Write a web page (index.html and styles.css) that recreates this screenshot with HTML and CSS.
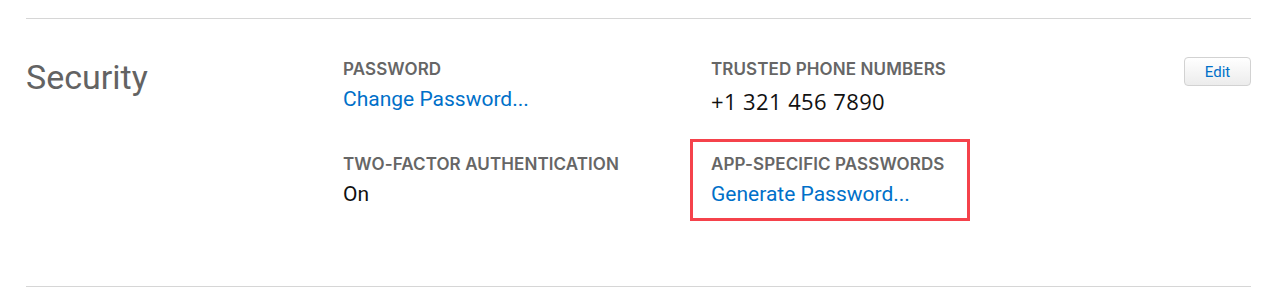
FILE: index.html
```html
<!DOCTYPE html>
<html lang="en">
<head>
<meta charset="utf-8">
<title>Security</title>
<link rel="stylesheet" href="styles.css">
</head>
<body>
<div class="page">
  <section class="section">
    <h2 class="section-title">Security</h2>
    <div class="fields">
      <div class="field">
        <div class="field-label">PASSWORD</div>
        <a class="field-link" href="#">Change Password...</a>
      </div>
      <div class="field">
        <div class="field-label">TRUSTED PHONE NUMBERS</div>
        <div class="field-value phone">+1 321 456 7890</div>
      </div>
      <div class="field">
        <div class="field-label">TWO-FACTOR AUTHENTICATION</div>
        <div class="field-value">On</div>
      </div>
      <div class="field highlighted">
        <div class="field-label">APP-SPECIFIC PASSWORDS</div>
        <a class="field-link" href="#">Generate Password...</a>
        <span class="highlight-box"></span>
      </div>
    </div>
    <button class="edit-btn" type="button">Edit</button>
  </section>
</div>
</body>
</html>
```
FILE: styles.css
```css
html, body {
  margin: 0;
  padding: 0;
  background: #fff;
}

body {
  font-family: Roboto, "Liberation Sans", Arial, sans-serif;
  color: #111;
}

.page {
  padding: 18px 28px 0 26px;
}

.section {
  display: flex;
  align-items: flex-start;
  border-top: 1px solid #d6d6d6;
  border-bottom: 1px solid #d6d6d6;
  padding: 38px 0 78px 0;
}

.section-title {
  width: 317px;
  flex: none;
  margin: 0;
  font-size: 34px;
  line-height: 40px;
  font-weight: 400;
  color: #636363;
}

.fields {
  display: grid;
  grid-template-columns: 368px 368px;
  row-gap: 41px;
  margin-top: 2px;
}

.field {
  display: flex;
  flex-direction: column;
  align-items: flex-start;
}

.field-label {
  font-family: Inter, Roboto, "Liberation Sans", Arial, sans-serif;
  font-size: 17px;
  line-height: 20px;
  font-weight: 600;
  letter-spacing: 0.1px;
  color: #666;
}

.field-link,
.field-value {
  margin-top: 6px;
  font-size: 21px;
  line-height: 28px;
  text-decoration: none;
}

.field-link {
  color: #0070c9;
}

.field-value {
  color: #111;
}

.phone {
  font-family: "Open Sans", "Liberation Sans", Arial, sans-serif;
  font-size: 22px;
  letter-spacing: 0.4px;
  margin-top: 8px;
  margin-bottom: -2px;
}

.highlighted {
  position: relative;
}

.highlight-box {
  position: absolute;
  left: -21px;
  top: -15px;
  width: 280px;
  height: 82px;
  box-sizing: border-box;
  border: 3px solid #f5424b;
  pointer-events: none;
}

.edit-btn {
  margin-left: auto;
  width: 67px;
  height: 29px;
  padding: 0;
  font-family: Roboto, "Liberation Sans", Arial, sans-serif;
  font-size: 15px;
  color: #0070c9;
  background: linear-gradient(#ffffff, #ececec);
  border: 1px solid #d2d2d2;
  border-radius: 4px;
}
```
